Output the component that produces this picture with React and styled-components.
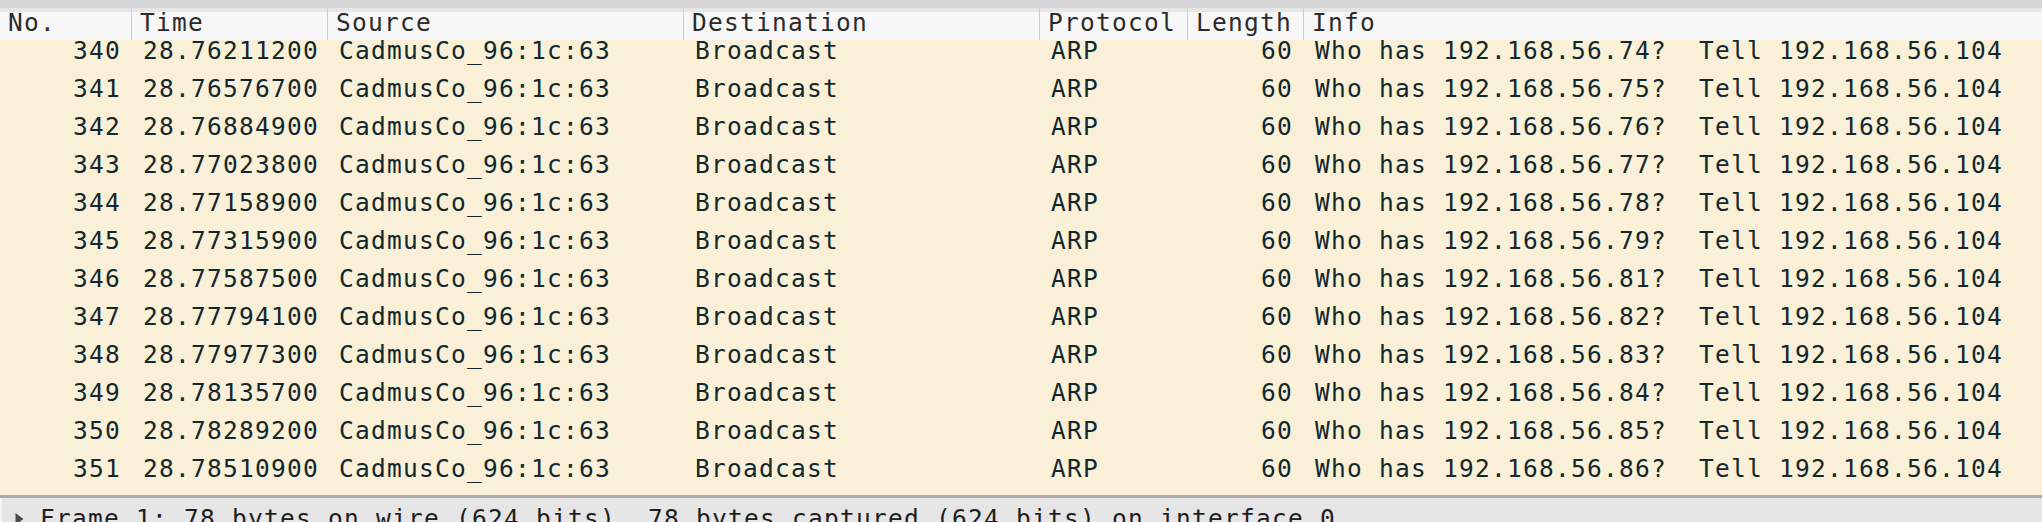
import React from "react";
import styled, { createGlobalStyle } from "styled-components";

const columns = [
  { key: "no", title: "No.", width: 131, right: true },
  { key: "time", title: "Time", width: 196 },
  { key: "source", title: "Source", width: 356 },
  { key: "dest", title: "Destination", width: 356 },
  { key: "proto", title: "Protocol", width: 148 },
  { key: "len", title: "Length", width: 116, right: true },
  { key: "info", title: "Info", width: 0 },
];

const times = [
  "28.76211200",
  "28.76576700",
  "28.76884900",
  "28.77023800",
  "28.77158900",
  "28.77315900",
  "28.77587500",
  "28.77794100",
  "28.77977300",
  "28.78135700",
  "28.78289200",
  "28.78510900",
  "28.78697100",
];
const hosts = [74, 75, 76, 77, 78, 79, 81, 82, 83, 84, 85, 86, 87];

const packets = times.map((t, i) => ({
  no: 340 + i,
  time: t,
  source: "CadmusCo_96:1c:63",
  dest: "Broadcast",
  proto: "ARP",
  len: 60,
  info: "Who has 192.168.56." + hosts[i] + "?  Tell 192.168.56.104",
}));

function App() {
  return (
    <>
      <GlobalStyle />
      <Window>
        <ToolStrip />
        <PacketList>
          <HeaderRow>
            {columns.map((col, index) => (
              <HeaderCell key={col.key} $width={col.width} $first={index === 0}>
                {col.title}
              </HeaderCell>
            ))}
          </HeaderRow>
          <ListBody>
            <Rows>
              {packets.map((p) => (
                <Row key={p.no}>
                  {columns.map((col) => (
                    <Cell key={col.key} $width={col.width} $right={col.right}>
                      {p[col.key]}
                    </Cell>
                  ))}
                </Row>
              ))}
            </Rows>
          </ListBody>
        </PacketList>
        <DetailPane>
          <DetailLine>
            <Arrow viewBox="0 0 8 12">
              <path d="M0 0 L8 6 L0 12 Z" fill="#4a4a4a" />
            </Arrow>
            Frame 1: 78 bytes on wire (624 bits), 78 bytes captured (624 bits)
            on interface 0
          </DetailLine>
        </DetailPane>
      </Window>
    </>
  );
}

const GlobalStyle = createGlobalStyle`
  html, body {
    margin: 0;
    padding: 0;
    background: #e6e6e6;
  }
  * {
    box-sizing: border-box;
  }
`;

const Window = styled.div`
  width: 2042px;
  height: 522px;
  overflow: hidden;
  display: flex;
  flex-direction: column;
  font-family: "DejaVu Sans Mono", "Liberation Mono", monospace;
  font-size: 24.5px;
  letter-spacing: 1.25px;
`;

const ToolStrip = styled.div`
  height: 12px;
  flex: none;
  background: #d5d5d5;
  border-bottom: 4px solid #e6e6e6;
`;

const PacketList = styled.div`
  flex: none;
  height: 486px;
  display: flex;
  flex-direction: column;
  background: #faf0d7;
  border-bottom: 3px solid #ababab;
`;

const HeaderRow = styled.div`
  display: flex;
  flex: none;
  height: 28px;
  background: #f7f7f7;
  position: relative;
  z-index: 1;
`;

const HeaderCell = styled.div`
  flex: ${(props) => (props.$width ? `0 0 ${props.$width}px` : "1 1 auto")};
  padding-left: 8px;
  line-height: 22px;
  color: #2b2b2b;
  white-space: pre;
  border-left: ${(props) => (props.$first ? "none" : "1px solid #cdcdcd")};
  margin-top: -4px;
  padding-top: 4px;
`;

const ListBody = styled.div`
  flex: 1;
  overflow: hidden;
`;

const Rows = styled.div`
  margin-top: -8px;
`;

const Row = styled.div`
  display: flex;
  height: 38px;
  line-height: 38px;
  color: #12272e;
  background: #faf0d7;
`;

const Cell = styled.div`
  flex: ${(props) => (props.$width ? `0 0 ${props.$width}px` : "1 1 auto")};
  padding: 0 ${(props) => (props.$right ? "10px" : "0")} 0
    ${(props) => (props.$right ? "0" : "12px")};
  text-align: ${(props) => (props.$right ? "right" : "left")};
  white-space: pre;
  overflow: hidden;
`;

const DetailPane = styled.div`
  flex: 1;
  background: #e6e6e6;
  border-left: 2px solid #f4f4f4;
  padding-top: 2px;
`;

const DetailLine = styled.div`
  display: flex;
  align-items: center;
  height: 38px;
  line-height: 38px;
  color: #1e1e1e;
  white-space: pre;
  padding-left: 13px;
`;

const Arrow = styled.svg`
  width: 9px;
  height: 12px;
  margin-right: 16px;
  flex: none;
`;

export default App;
